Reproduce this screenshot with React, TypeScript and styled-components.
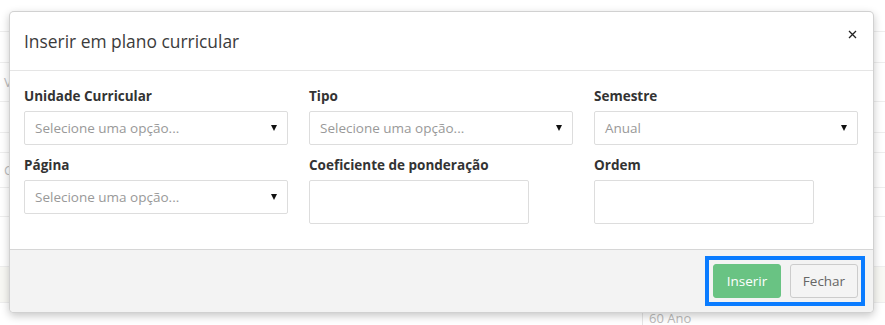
import React from "react";
import styled, { createGlobalStyle } from "styled-components";

const Global = createGlobalStyle`
  html, body { margin: 0; padding: 0; background: #fff; }
  body { font-family: "Open Sans", "Liberation Sans", sans-serif; color: #333; }
  * { box-sizing: border-box; }
`;

const Page = styled.div`
  position: relative;
  width: 885px;
  height: 325px;
  overflow: hidden;
  background: #fff;
`;

const Backdrop = styled.div`
  display: flex;
  flex-direction: column;
`;

const BgRow = styled.div<{ $h: number; $tint?: boolean }>`
  height: ${(p) => p.$h}px;
  border-bottom: 1px solid #eeeeee;
  background: ${(p) => (p.$tint ? "#f8f8f4" : "transparent")};
  font-size: 13px;
  color: #bbb;
  display: flex;
  align-items: center;
  padding-left: 4px;
`;

const BgFoot = styled.div`
  display: flex;
  height: 40px;
`;

const BgCellText = styled.div`
  margin-left: 642px;
  border-left: 1px solid #e6e6e6;
  padding: 6px 0 0 6px;
  font-size: 13px;
  color: #bbb;
`;

const Modal = styled.div`
  position: absolute;
  left: 9px;
  top: 11px;
  width: 865px;
  background: #fff;
  border: 1px solid rgba(0, 0, 0, 0.18);
  border-radius: 5px;
  box-shadow: 0 3px 8px rgba(0, 0, 0, 0.22);
  overflow: hidden;
`;

const Header = styled.div`
  display: flex;
  align-items: center;
  justify-content: space-between;
  padding: 16px 15px 16px 14px;
  border-bottom: 1px solid #e5e5e5;
`;

const Title = styled.h4`
  margin: 0;
  font-size: 17.4px;
  font-weight: 400;
  line-height: 26px;
  color: #3b3b3b;
`;

const Close = styled.button`
  border: 0;
  background: transparent;
  padding: 0;
  margin: -14px 0 0 0;
  width: 12px;
  height: 12px;
  display: flex;
  align-items: center;
  justify-content: center;
  cursor: pointer;
`;

const Body = styled.div`
  padding: 15px 15px 15px 14px;
`;

const Grid = styled.div`
  display: grid;
  grid-template-columns: repeat(3, 264px);
  column-gap: 21px;
`;

const Group = styled.div`
  margin-bottom: 10px;
`;

const Label = styled.label`
  display: block;
  font-size: 13.5px;
  font-weight: 700;
  line-height: 20px;
  color: #333;
  margin-bottom: 5px;
`;

const SelectBox = styled.div`
  height: 34px;
  border: 1px solid #dddddd;
  border-radius: 2px;
  display: flex;
  align-items: center;
  justify-content: space-between;
  padding: 0 10px 0 10px;
  font-size: 13.5px;
  color: #999;
  background: #fff;
`;

const Caret = styled.span`
  width: 0;
  height: 0;
  border-left: 3px solid transparent;
  border-right: 3px solid transparent;
  border-top: 6px solid #111;
`;

const TextInput = styled.input`
  display: block;
  width: 220px;
  height: 44px;
  border: 1px solid #dddddd;
  border-radius: 2px;
  font: inherit;
  font-size: 13.5px;
  padding: 6px 10px;
  outline: none;
`;

const Footer = styled.div`
  display: flex;
  justify-content: flex-end;
  padding: 6px 8px 6px 15px;
  background: #f3f3f3;
  border-top: 1px solid #d6d6d6;
`;

const Highlight = styled.div`
  display: flex;
  gap: 9px;
  border: 4px solid #0a7cff;
  padding: 4px 3px 4px 4px;
`;

const Button = styled.button<{ $primary?: boolean }>`
  width: 68px;
  height: 34px;
  border-radius: 3px;
  font-family: inherit;
  font-size: 13.5px;
  cursor: pointer;
  border: 1px solid ${(p) => (p.$primary ? "#69c383" : "#cccccc")};
  background: ${(p) => (p.$primary ? "#69c383" : "#f4f4f4")};
  color: ${(p) => (p.$primary ? "#fff" : "#666")};
`;

function Select({ value }: { value: string }) {
  return (
    <SelectBox>
      <span>{value}</span>
      <Caret />
    </SelectBox>
  );
}

export default function App() {
  return (
    <Page>
      <Global />
      <Backdrop>
        <BgRow $h={32} />
        <BgRow $h={31} />
        <BgRow $h={39}>V</BgRow>
        <BgRow $h={31} />
        <BgRow $h={20} />
        <BgRow $h={35}>C</BgRow>
        <BgRow $h={29} />
        <BgRow $h={50} />
        <BgRow $h={36} $tint />
        <BgFoot>
          <BgCellText>60 Ano</BgCellText>
        </BgFoot>
      </Backdrop>
      <Modal>
        <Header>
          <Title>Inserir em plano curricular</Title>
          <Close aria-label="Fechar">
            <svg width="9" height="9" viewBox="0 0 9 9">
              <path d="M1 1L8 8M8 1L1 8" stroke="#222" strokeWidth="1.3" fill="none" />
            </svg>
          </Close>
        </Header>
        <Body>
          <Grid>
            <Group>
              <Label>Unidade Curricular</Label>
              <Select value="Selecione uma opção..." />
            </Group>
            <Group>
              <Label>Tipo</Label>
              <Select value="Selecione uma opção..." />
            </Group>
            <Group>
              <Label>Semestre</Label>
              <Select value="Anual" />
            </Group>
            <Group>
              <Label>Página</Label>
              <Select value="Selecione uma opção..." />
            </Group>
            <Group>
              <Label>Coeficiente de ponderação</Label>
              <TextInput type="text" />
            </Group>
            <Group>
              <Label>Ordem</Label>
              <TextInput type="text" />
            </Group>
          </Grid>
        </Body>
        <Footer>
          <Highlight>
            <Button $primary>Inserir</Button>
            <Button>Fechar</Button>
          </Highlight>
        </Footer>
      </Modal>
    </Page>
  );
}
